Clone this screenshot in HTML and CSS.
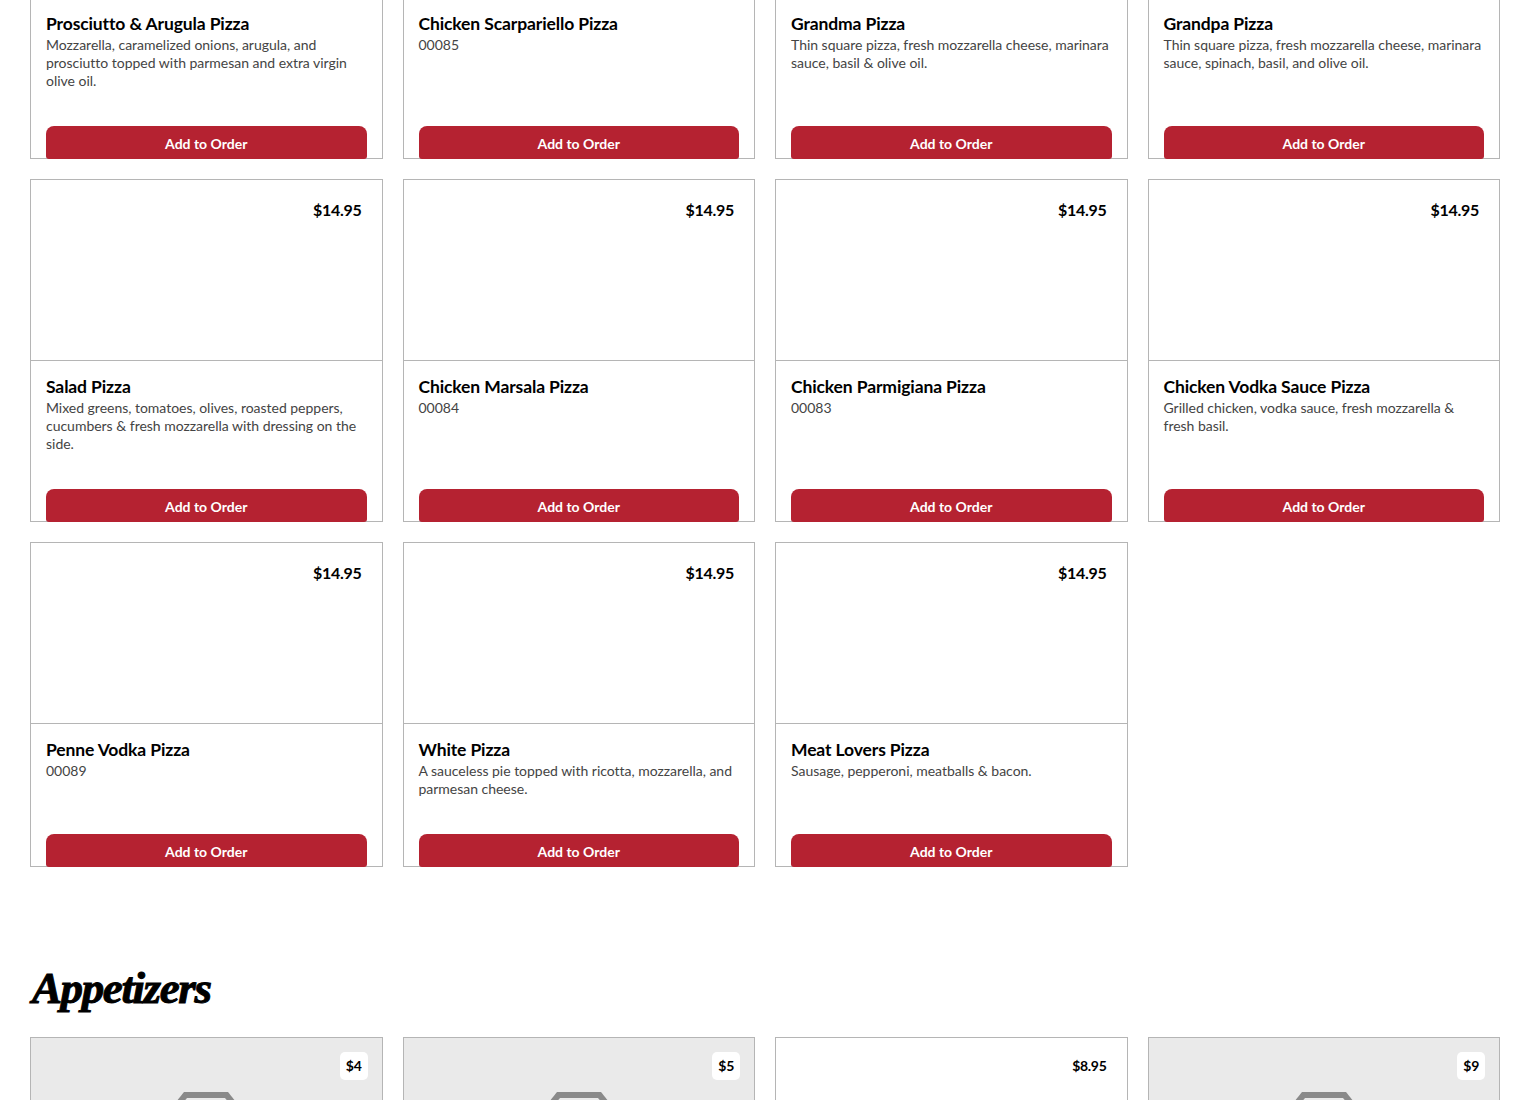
FILE: index.html
```html
<!DOCTYPE html>
<html lang="en">
<head>
<meta charset="utf-8">
<title>Menu</title>
<link rel="stylesheet" href="styles.css">
</head>
<body>
<main class="page">
  <section class="grid">
    <article class="card"><div class="media"></div><div class="body"><h3 class="name">Prosciutto &amp; Arugula Pizza</h3><p class="desc">Mozzarella, caramelized onions, arugula, and prosciutto topped with parmesan and extra virgin olive oil.</p><button class="add">Add to Order</button></div></article>
    <article class="card"><div class="media"></div><div class="body"><h3 class="name">Chicken Scarpariello Pizza</h3><p class="desc">00085</p><button class="add">Add to Order</button></div></article>
    <article class="card"><div class="media"></div><div class="body"><h3 class="name">Grandma Pizza</h3><p class="desc">Thin square pizza, fresh mozzarella cheese, marinara sauce, basil &amp; olive oil.</p><button class="add">Add to Order</button></div></article>
    <article class="card"><div class="media"></div><div class="body"><h3 class="name">Grandpa Pizza</h3><p class="desc">Thin square pizza, fresh mozzarella cheese, marinara sauce, spinach, basil, and olive oil.</p><button class="add">Add to Order</button></div></article>

    <article class="card"><div class="media"><span class="price">$14.95</span></div><div class="body"><h3 class="name">Salad Pizza</h3><p class="desc">Mixed greens, tomatoes, olives, roasted peppers, cucumbers &amp; fresh mozzarella with dressing on the side.</p><button class="add">Add to Order</button></div></article>
    <article class="card"><div class="media"><span class="price">$14.95</span></div><div class="body"><h3 class="name">Chicken Marsala Pizza</h3><p class="desc">00084</p><button class="add">Add to Order</button></div></article>
    <article class="card"><div class="media"><span class="price">$14.95</span></div><div class="body"><h3 class="name">Chicken Parmigiana Pizza</h3><p class="desc">00083</p><button class="add">Add to Order</button></div></article>
    <article class="card"><div class="media"><span class="price">$14.95</span></div><div class="body"><h3 class="name">Chicken Vodka Sauce Pizza</h3><p class="desc">Grilled chicken, vodka sauce, fresh mozzarella &amp; fresh basil.</p><button class="add">Add to Order</button></div></article>

    <article class="card"><div class="media"><span class="price">$14.95</span></div><div class="body"><h3 class="name">Penne Vodka Pizza</h3><p class="desc">00089</p><button class="add">Add to Order</button></div></article>
    <article class="card"><div class="media"><span class="price">$14.95</span></div><div class="body"><h3 class="name">White Pizza</h3><p class="desc">A sauceless pie topped with ricotta, mozzarella, and parmesan cheese.</p><button class="add">Add to Order</button></div></article>
    <article class="card"><div class="media"><span class="price">$14.95</span></div><div class="body"><h3 class="name">Meat Lovers Pizza</h3><p class="desc">Sausage, pepperoni, meatballs &amp; bacon.</p><button class="add">Add to Order</button></div></article>
  </section>

  <h2 class="section-title">Appetizers</h2>

  <section class="grid">
    <article class="card"><div class="media placeholder"><span class="price small">$4</span><svg class="box" viewBox="0 0 60 60"><path d="M8 0H52L60 10V60H0V10Z" fill="#8a8a8a"/><path d="M11 6H49L54 12V54H6V12Z" fill="#eaeaea"/></svg></div></article>
    <article class="card"><div class="media placeholder"><span class="price small">$5</span><svg class="box" viewBox="0 0 60 60"><path d="M8 0H52L60 10V60H0V10Z" fill="#8a8a8a"/><path d="M11 6H49L54 12V54H6V12Z" fill="#eaeaea"/></svg></div></article>
    <article class="card"><div class="media"><span class="price small">$8.95</span></div></article>
    <article class="card"><div class="media placeholder"><span class="price small">$9</span><svg class="box" viewBox="0 0 60 60"><path d="M8 0H52L60 10V60H0V10Z" fill="#8a8a8a"/><path d="M11 6H49L54 12V54H6V12Z" fill="#eaeaea"/></svg></div></article>
  </section>
</main>
</body>
</html>
```
FILE: styles.css
```css
html, body { margin: 0; padding: 0; background: #fff; }
body { height: 1100px; overflow: hidden; font-family: Lato, "Open Sans", "Liberation Sans", sans-serif; }
.page { margin-top: -184px; padding: 0 30px; }
.grid { display: grid; grid-template-columns: repeat(4, 1fr); gap: 20px; }
.card { display: flex; flex-direction: column; border: 1px solid #b5b5b5; background: #fff; }
.media { position: relative; height: 180px; flex: none; border-bottom: 1px solid #b5b5b5; overflow: hidden; }
.placeholder { background: #eaeaea; }
.box { position: absolute; left: 50%; top: 54px; width: 60px; height: 60px; margin-left: -30px; }
.price { position: absolute; top: 15px; right: 14px; padding: 5px 6px; border-radius: 5px; background: #fff; color: #000; font-size: 16px; font-weight: 700; line-height: 20px; letter-spacing: -0.3px; }
.price.small { top: 14px; font-size: 14px; line-height: 18px; }
.body { display: flex; flex-direction: column; flex: 1; padding: 15px 15px 0; }
.name { margin: 0 0 1px; color: #000; font-size: 17.5px; font-weight: 700; line-height: 22px; letter-spacing: -0.12px; }
.desc { margin: 0 0 36px; color: #444; font-size: 14px; line-height: 18px; letter-spacing: -0.02px; }
.add { display: block; box-sizing: border-box; width: 100%; height: 33px; margin: auto 0 -1px; padding: 3px 0 0; border: 0; border-radius: 8px 8px 3px 3px; background: #b52231; color: #fff; font: 700 14px/30px Lato, sans-serif; }
.section-title { margin: 91px 0 19px; padding-left: 2px; color: #000; font-family: "Liberation Serif", serif; font-size: 45px; font-style: italic; font-weight: 700; line-height: 60px; letter-spacing: -1.4px; -webkit-text-stroke: 1px #000; }
```
